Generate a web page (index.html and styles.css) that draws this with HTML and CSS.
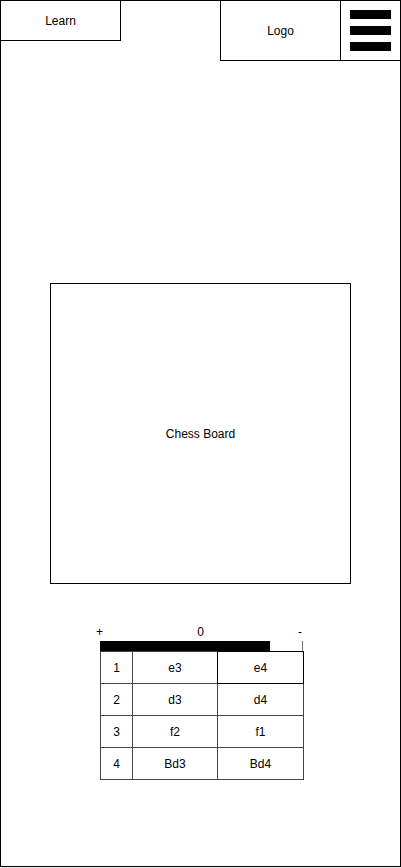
FILE: index.html
```html
<!DOCTYPE html>
<html lang="en">
<head>
    <meta charset="UTF-8">
    <meta name="viewport" content="width=device-width, initial-scale=1.0">
    <title>Chess Trainer</title>
    <link rel="stylesheet" href="styles.css">
</head>
<body>
    <div class="frame">
        <header class="top-bar">
            <div class="learn-btn">Learn</div>
            <div class="spacer"></div>
            <div class="logo-box">Logo</div>
            <div class="menu-box">
                <span class="menu-line"></span>
                <span class="menu-line"></span>
                <span class="menu-line"></span>
            </div>
        </header>

        <div class="board">Chess Board</div>

        <div class="moves-panel">
            <div class="eval-labels">
                <span>+</span>
                <span>0</span>
                <span>-</span>
            </div>
            <div class="eval-bar">
                <div class="eval-fill" style="width: 84%"></div>
            </div>
            <div class="moves-grid">
                <div class="cell">1</div>
                <div class="cell">e3</div>
                <div class="cell active">e4</div>
                <div class="cell">2</div>
                <div class="cell">d3</div>
                <div class="cell">d4</div>
                <div class="cell">3</div>
                <div class="cell">f2</div>
                <div class="cell">f1</div>
                <div class="cell">4</div>
                <div class="cell">Bd3</div>
                <div class="cell">Bd4</div>
            </div>
        </div>
    </div>
</body>
</html>
```

FILE: styles.css
```css
html {
    background-color: #ececec;
}

body {
    margin: 0;
    font-family: "Liberation Sans", Arial, sans-serif;
    font-size: 12px;
    color: #000;
}

/* Outer phone frame */
.frame {
    box-sizing: border-box;
    width: 401px;
    height: 867px;
    border: 1px solid #000;
    background-color: #fff;
}

/* Header */
.top-bar {
    display: flex;
    align-items: flex-start;
}

.learn-btn {
    box-sizing: border-box;
    width: 120px;
    height: 40px;
    border-right: 1px solid #000;
    border-bottom: 1px solid #000;
    display: flex;
    align-items: center;
    justify-content: center;
}

.spacer {
    flex: 1;
}

.logo-box {
    box-sizing: border-box;
    width: 120px;
    height: 60px;
    border-left: 1px solid #000;
    border-bottom: 1px solid #000;
    display: flex;
    align-items: center;
    justify-content: center;
}

.menu-box {
    box-sizing: border-box;
    width: 60px;
    height: 60px;
    border-left: 1px solid #000;
    border-bottom: 1px solid #000;
    padding: 9px 0 0 9px;
    display: flex;
    flex-direction: column;
    gap: 7px;
}

.menu-line {
    display: block;
    width: 41px;
    height: 9px;
    background-color: #000;
}

/* Board placeholder */
.board {
    box-sizing: border-box;
    width: 301px;
    height: 301px;
    margin: 222px auto 0;
    border: 1px solid #000;
    display: flex;
    align-items: center;
    justify-content: center;
}

/* Evaluation + move list */
.moves-panel {
    width: 204px;
    margin: 41px 0 0 99px;
}

.eval-labels {
    display: flex;
    justify-content: space-between;
    margin: 0 2px 1px -4px;
    height: 15px;
    line-height: 14px;
}

.eval-bar {
    box-sizing: border-box;
    width: 203px;
    height: 10px;
    border-right: 1px solid #777;
    background-color: #fff;
}

.eval-fill {
    height: 100%;
    background-color: #000;
}

.moves-grid {
    display: grid;
    grid-template-columns: 31px 84px 85px;
    grid-template-rows: 31px 31px 31px 31px;
    gap: 1px;
    padding: 1px;
    width: fit-content;
    background-color: #444;
}

.cell {
    background-color: #fff;
    display: flex;
    align-items: center;
    justify-content: center;
}

.cell.active {
    outline: 1px solid #000;
}
```
